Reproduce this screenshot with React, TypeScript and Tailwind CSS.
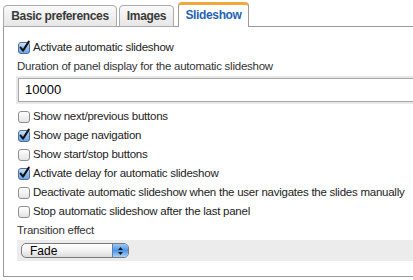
import React from 'react';

const font = { fontFamily: '"Liberation Sans", Arial, sans-serif' };

function Check({ checked }: { checked?: boolean }) {
  if (!checked) {
    return (
      <span className="inline-block w-[12px] h-[12px] rounded-[3px] border border-[#8e8e8e] bg-gradient-to-b from-white to-[#e4e4e4] shadow-[inset_0_1px_0_#fff]" />
    );
  }
  return (
    <svg width="14" height="14" viewBox="0 0 14 14" className="-ml-px -mt-[2px]">
      <defs>
        <linearGradient id="cb" x1="0" y1="0" x2="0" y2="1">
          <stop offset="0" stopColor="#d3e6fa" />
          <stop offset="0.5" stopColor="#8fbcee" />
          <stop offset="1" stopColor="#6aa6e8" />
        </linearGradient>
      </defs>
      <rect x="1.5" y="2.5" width="11" height="11" rx="2.5" fill="url(#cb)" stroke="#4f6f9c" />
      <path d="M3.6 7.6 L6 10.6 L11.8 1.6" fill="none" stroke="#111" strokeWidth="2" strokeLinecap="round" strokeLinejoin="round" />
    </svg>
  );
}

function Row({ label, checked }: { label: string; checked?: boolean }) {
  return (
    <div className="h-[19px] flex items-center whitespace-nowrap">
      <span className="w-[14px] h-[14px] flex items-center justify-center">
        <Check checked={checked} />
      </span>
      <span className="ml-[2px] text-[11.5px] text-[#222] tracking-[-0.25px]">{label}</span>
    </div>
  );
}

export default function App() {
  return (
    <div className="w-[413px] h-[280px] bg-white overflow-hidden" style={font}>
      {/* Tabs */}
      <div className="flex items-end h-[26px] pl-[3px] relative z-10">
        <div className="w-[114px] h-[22px] -mb-px flex items-center justify-center rounded-t-[4px] border border-[#aaa] bg-gradient-to-b from-[#fafafa] to-[#e6e6e6] text-[12px] font-bold text-[#3a3a3a] tracking-[-0.35px]">
          Basic preferences
        </div>
        <div className="ml-[2px] w-[55px] h-[22px] -mb-px flex items-center justify-center rounded-t-[4px] border border-[#aaa] bg-gradient-to-b from-[#fafafa] to-[#e6e6e6] text-[12px] font-bold text-[#3a3a3a] tracking-[-0.35px]">
          Images
        </div>
        <div className="ml-[4px] w-[71px] h-[25px] -mb-px flex items-center justify-center rounded-t-[4px] border-x border-[#999] border-t-[3px] border-t-[#f2a93b] bg-white text-[12px] font-bold text-[#1f63b8] tracking-[-0.35px] pb-[2px]">
          Slideshow
        </div>
      </div>

      {/* Panel */}
      <div className="ml-[3px] border-l border-t border-b border-[#9a9a9a] pl-[13px] pt-[11px] pb-[15px]">
        <Row label="Activate automatic slideshow" checked />
        <div className="h-[19px] flex items-center text-[11.5px] text-[#333] tracking-[-0.25px] whitespace-nowrap">
          Duration of panel display for the automatic slideshow
        </div>
        <div className="-ml-[1px] bg-[#e8e8e8] pt-[2px] pb-[2px] pl-[2px]">
          <div className="h-[24px] bg-white border border-r-0 border-[#a6a6a6] flex items-center pl-[6px] text-[13px] text-black">
            10000
          </div>
        </div>
        <div className="mt-[3px]">
          <Row label="Show next/previous buttons" />
          <Row label="Show page navigation" checked />
          <Row label="Show start/stop buttons" />
          <Row label="Activate delay for automatic slideshow" checked />
          <Row label="Deactivate automatic slideshow when the user navigates the slides manually" />
          <Row label="Stop automatic slideshow after the last panel" />
        </div>
        <div className="h-[19px] flex items-center text-[11.5px] text-[#333] tracking-[-0.25px]">Transition effect</div>
        <div className="bg-[#ececec] h-[21px] flex items-center pl-[4px]">
          <div className="w-[108px] h-[15px] rounded-[5px] border border-[#7a7a7a] bg-gradient-to-b from-white via-[#f3f3f3] to-[#dcdcdc] flex items-center overflow-hidden">
            <span className="flex-1 pl-[8px] text-[12px] text-black leading-none">Fade</span>
            <span className="w-[16px] h-full bg-gradient-to-b from-[#9cc8f4] via-[#4d95e4] to-[#a9d0f7] border-l border-[#5b7fb0] flex flex-col items-center justify-center gap-[2px]">
              <svg width="5" height="3" viewBox="0 0 5 3"><path d="M0 3 L2.5 0 L5 3Z" fill="#1a1a1a" /></svg>
              <svg width="5" height="3" viewBox="0 0 5 3"><path d="M0 0 L2.5 3 L5 0Z" fill="#1a1a1a" /></svg>
            </span>
          </div>
        </div>
      </div>
    </div>
  );
}
